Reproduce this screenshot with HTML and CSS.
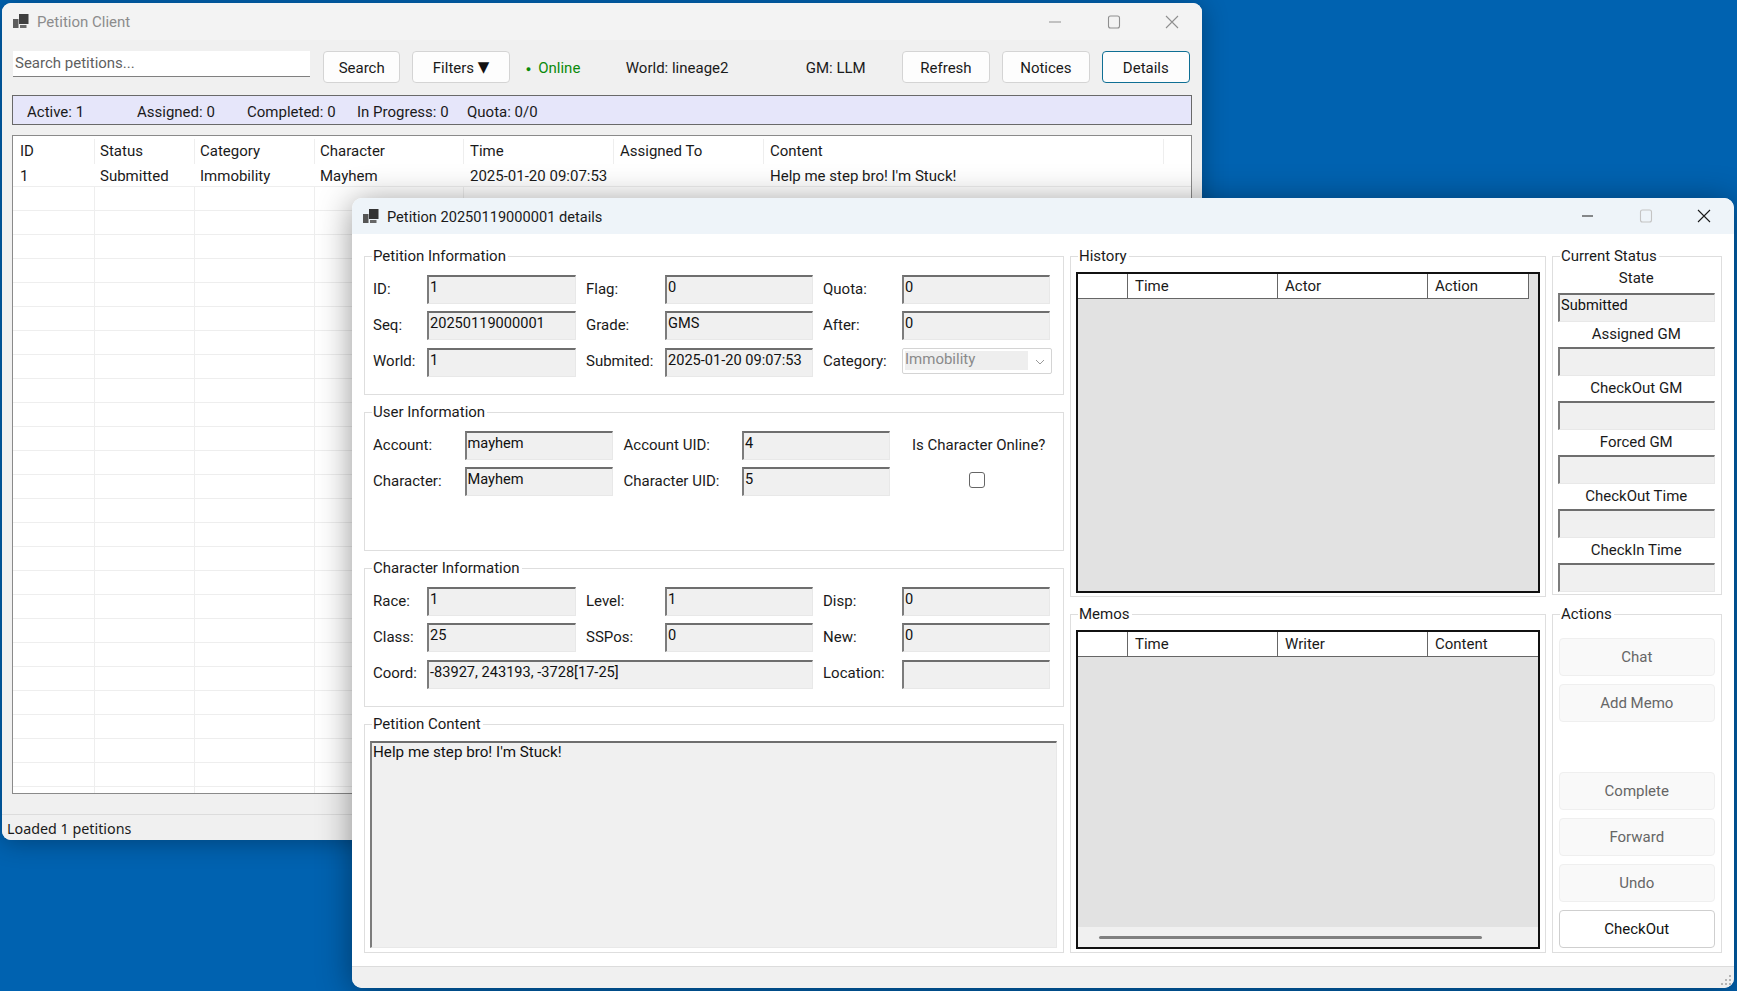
FILE: index.html
```html
<!DOCTYPE html>
<html lang="en">
<head>
<meta charset="utf-8">
<title>Petition Client</title>
<link rel="stylesheet" href="styles.css">
</head>
<body>
<div class="desktop">

  <section class="window main-window">
    <header class="titlebar main-titlebar">
      <svg class="app-icon" viewBox="0 0 16 15"><rect x="0" y="5" width="5.5" height="9" fill="#5c5c5c"/><rect x="6" y="0" width="9.5" height="10" fill="#3f3f3f"/><rect x="7" y="11" width="6.5" height="3" fill="#6a6a6a"/></svg>
      <span class="title-text">Petition Client</span>
      <div class="win-controls inactive">
        <svg viewBox="0 0 14 14"><path d="M1 7h12"/></svg>
        <svg viewBox="0 0 14 14"><rect x="1.5" y="1" width="11" height="12" rx="2"/></svg>
        <svg viewBox="0 0 14 14"><path d="M1 1l12 12M13 1L1 13"/></svg>
      </div>
    </header>

    <div class="toolbar">
      <div class="search">Search petitions...</div>
      <button class="btn btn-search">Search</button>
      <button class="btn btn-filters">Filters <span class="caret">▼</span></button>
      <span class="tb-online"><span class="dot">●</span>Online</span>
      <span class="tb-world">World: lineage2</span>
      <span class="tb-gm">GM: LLM</span>
      <button class="btn btn-action">Refresh</button>
      <button class="btn btn-action">Notices</button>
      <button class="btn btn-action btn-default">Details</button>
    </div>

    <div class="stats">
      <span>Active: 1</span>
      <span>Assigned: 0</span>
      <span>Completed: 0</span>
      <span>In Progress: 0</span>
      <span>Quota: 0/0</span>
    </div>

    <div class="list">
      <div class="list-head">
        <span class="c-id">ID</span>
        <span class="c-status">Status</span>
        <span class="c-cat">Category</span>
        <span class="c-char">Character</span>
        <span class="c-time">Time</span>
        <span class="c-assn">Assigned To</span>
        <span class="c-content">Content</span>
      </div>
      <div class="list-row">
        <span class="c-id">1</span>
        <span class="c-status">Submitted</span>
        <span class="c-cat">Immobility</span>
        <span class="c-char">Mayhem</span>
        <span class="c-time">2025-01-20 09:07:53</span>
        <span class="c-assn"></span>
        <span class="c-content">Help me step bro! I'm Stuck!</span>
      </div>
      <div class="list-empty"></div>
    </div>

    <footer class="main-status">Loaded 1 petitions</footer>
  </section>

  <section class="window details-window">
    <header class="titlebar details-titlebar">
      <svg class="app-icon" viewBox="0 0 16 15"><rect x="0" y="5" width="5.5" height="9" fill="#555"/><rect x="6" y="0" width="9.5" height="10" fill="#333"/><rect x="7" y="11" width="6.5" height="3" fill="#666"/></svg>
      <span class="title-text">Petition 20250119000001 details</span>
      <div class="win-controls">
        <svg viewBox="0 0 14 14"><path d="M2 7h11"/></svg>
        <svg class="off" viewBox="0 0 14 14"><rect x="1.5" y="1" width="11" height="12" rx="2"/></svg>
        <svg viewBox="0 0 14 14"><path d="M1 1l12 12M13 1L1 13"/></svg>
      </div>
    </header>

    <div class="details-body">
      <div class="col-left">
        <div class="group group-std">
          <span class="legend">Petition Information</span>
          <div class="form form-three">
            <span>ID:</span><div class="field">1</div>
            <span>Flag:</span><div class="field">0</div>
            <span>Quota:</span><div class="field">0</div>
            <span>Seq:</span><div class="field">20250119000001</div>
            <span>Grade:</span><div class="field">GMS</div>
            <span>After:</span><div class="field">0</div>
            <span>World:</span><div class="field">1</div>
            <span>Submited:</span><div class="field">2025-01-20 09:07:53</div>
            <span>Category:</span>
            <div class="combo"><span class="combo-value">Immobility</span>
              <svg class="chevron" viewBox="0 0 10 6"><path d="M1 1l4 4 4-4"/></svg>
            </div>
          </div>
        </div>

        <div class="group group-std">
          <span class="legend">User Information</span>
          <div class="form form-user">
            <span>Account:</span><div class="field">mayhem</div>
            <span>Account UID:</span><div class="field">4</div>
            <span class="online-label">Is Character Online?</span>
            <span>Character:</span><div class="field">Mayhem</div>
            <span>Character UID:</span><div class="field">5</div>
            <span class="online-check"><span class="checkbox"></span></span>
          </div>
        </div>

        <div class="group group-std">
          <span class="legend">Character Information</span>
          <div class="form form-three">
            <span>Race:</span><div class="field">1</div>
            <span>Level:</span><div class="field">1</div>
            <span>Disp:</span><div class="field">0</div>
            <span>Class:</span><div class="field">25</div>
            <span>SSPos:</span><div class="field">0</div>
            <span>New:</span><div class="field">0</div>
            <span>Coord:</span><div class="field span-three">-83927, 243193, -3728[17-25]</div>
            <span>Location:</span><div class="field"></div>
          </div>
        </div>

        <div class="group group-content">
          <span class="legend">Petition Content</span>
          <div class="field content-area">Help me step bro! I'm Stuck!</div>
        </div>
      </div>

      <div class="col-mid">
        <div class="group group-history">
          <span class="legend">History</span>
          <div class="grid-view">
            <div class="grid-head history-head">
              <span class="gh-blank"></span><span>Time</span><span>Actor</span><span class="gh-last">Action</span>
            </div>
          </div>
        </div>
        <div class="group group-memos">
          <span class="legend">Memos</span>
          <div class="grid-view">
            <div class="grid-head memo-head">
              <span class="gh-blank"></span><span>Time</span><span>Writer</span><span class="gh-last">Content</span>
            </div>
            <div class="grid-fill"></div>
            <div class="hscroll"><span class="hthumb"></span></div>
          </div>
        </div>
      </div>

      <div class="col-right">
        <div class="group group-status">
          <span class="legend">Current Status</span>
          <div class="status-list">
            <span class="status-label status-first">State</span><div class="field">Submitted</div>
            <span class="status-label">Assigned GM</span><div class="field"></div>
            <span class="status-label">CheckOut GM</span><div class="field"></div>
            <span class="status-label">Forced GM</span><div class="field"></div>
            <span class="status-label">CheckOut Time</span><div class="field"></div>
            <span class="status-label">CheckIn Time</span><div class="field"></div>
          </div>
        </div>
        <div class="group group-actions">
          <span class="legend">Actions</span>
          <div class="action-list">
            <button class="action" disabled>Chat</button>
            <button class="action" disabled>Add Memo</button>
            <span class="action-gap"></span>
            <button class="action" disabled>Complete</button>
            <button class="action" disabled>Forward</button>
            <button class="action" disabled>Undo</button>
            <button class="action action-on">CheckOut</button>
          </div>
        </div>
      </div>
    </div>

    <footer class="details-status">
      <svg class="grip" viewBox="0 0 12 12"><g fill="#b5b5b5"><rect x="9" y="1" width="2" height="2"/><rect x="5" y="5" width="2" height="2"/><rect x="9" y="5" width="2" height="2"/><rect x="1" y="9" width="2" height="2"/><rect x="5" y="9" width="2" height="2"/><rect x="9" y="9" width="2" height="2"/></g></svg>
    </footer>
  </section>
</div>
</body>
</html>
```
FILE: styles.css
```css
* { box-sizing: border-box; }
html, body { margin: 0; padding: 0; }
body {
  width: 1737px;
  height: 991px;
  overflow: hidden;
  font-family: Roboto, "Liberation Sans", sans-serif;
  font-size: 15px;
  color: #1a1a1a;
}
.desktop {
  position: relative;
  width: 1737px;
  height: 991px;
  background: #0062b0;
  overflow: hidden;
}
.window {
  position: absolute;
  display: flex;
  flex-direction: column;
  overflow: hidden;
}
.main-window {
  left: 2px;
  top: 3px;
  width: 1200px;
  height: 837px;
  background: #f0f0f0;
  border-radius: 9px;
  box-shadow: 0 2px 26px rgba(0, 0, 0, .32);
}
.details-window {
  left: 352px;
  top: 198px;
  width: 1382px;
  height: 790px;
  background: #fff;
  border-radius: 10px;
  box-shadow: 0 4px 34px rgba(0, 0, 0, .42);
}

/* title bars */
.titlebar {
  display: flex;
  align-items: center;
  flex: none;
}
.main-titlebar { height: 37px; background: #f3f3f3; padding-left: 11px; }
.details-titlebar { height: 36px; background: #eef4f9; padding-left: 11px; }
.app-icon { width: 16px; height: 15px; flex: none; }
.title-text { margin-left: 8px; }
.main-titlebar .title-text { color: #8c8c8c; }
.details-titlebar .title-text { font-size: 14.6px; padding-top: 2px; }
.win-controls {
  margin-left: auto;
  display: flex;
  align-items: center;
}
.win-controls svg {
  width: 14px;
  height: 14px;
  fill: none;
  stroke: #1a1a1a;
  stroke-width: 1.1;
}
.win-controls svg + svg { margin-left: 44.5px; }
.win-controls .off { stroke: #c4c4c4; }
.win-controls.inactive svg { stroke: #8f8f8f; }
.main-titlebar .win-controls { padding-right: 23px; }
.details-titlebar .win-controls { padding-right: 23px; }

/* toolbar */
.toolbar {
  display: flex;
  align-items: flex-start;
  padding: 11px 0 0 11px;
  height: 43px;
  flex: none;
}
.search {
  width: 299px;
  height: 26px;
  background: #fff;
  border-bottom: 1px solid #808080;
  padding: 2px 2px 0;
  color: #5f5f5f;
  line-height: 21px;
  margin-right: 13px;
}
.btn {
  height: 32px;
  padding: 2px 0 0;
  border: 1px solid #d4d4d4;
  border-radius: 4px;
  background: #fdfdfd;
  font: inherit;
  color: #1a1a1a;
}
.btn-search { width: 78px; margin-right: 12px; }
.btn-filters { width: 98px; }
.caret { font-family: "DejaVu Sans", sans-serif; font-size: 15px; line-height: 14px; color: #111; position: relative; top: -1px; }
.btn-action { width: 88px; margin-right: 12.5px; }
.btn-default { border-color: #0f6f94; }
.tb-online, .tb-world, .tb-gm { line-height: 34px; flex: none; }
.tb-online { width: 100px; margin-left: 16px; color: #0a8a0a; }
.dot { font-size: 9px; margin-right: 7px; vertical-align: 1px; }
.tb-world { width: 180px; }
.tb-gm { width: 96.5px; }

/* stats bar */
.stats {
  display: flex;
  flex: none;
  height: 30px;
  margin: 12px 10px 0;
  padding: 4px 0 0 14px;
  align-items: center;
  background: #e6e6fa;
  border: 1px solid #696969;
}
.stats span { width: 110px; flex: none; }

/* petition list */
.list {
  display: flex;
  flex-direction: column;
  flex: none;
  height: 659px;
  margin: 10px 10px 0;
  background: #fff;
  border: 1px solid #8a8a8a;
}
.list-head, .list-row { display: flex; flex: none; }
.list-head { height: 28px; padding-top: 3px; }
.list-row { height: 23px; border-bottom: 1px solid #eeeeee; }
.list-head span, .list-row span {
  display: block;
  flex: none;
  padding-left: 5px;
  line-height: 24px;
}
.list-row span { line-height: 24px; }
.list-head span { border-right: 1px solid #eeeeee; }
.list-head .c-id, .list-row .c-id { padding-left: 7px; }
.list-head .c-time, .list-row .c-time,
.list-head .c-assn, .list-row .c-assn,
.list-head .c-content, .list-row .c-content { padding-left: 6px; }
.c-id { width: 82px; }
.c-status { width: 100px; }
.c-cat { width: 120px; }
.c-char { width: 149px; }
.c-time { width: 150px; }
.c-assn { width: 150px; }
.c-content { width: 400px; }
.list-empty {
  flex: 1;
  background-color: #fff;
  background-image:
    repeating-linear-gradient(to bottom, transparent 0 23px, #eeeeee 23px 24px),
    linear-gradient(#eeeeee, #eeeeee),
    linear-gradient(#eeeeee, #eeeeee),
    linear-gradient(#eeeeee, #eeeeee),
    linear-gradient(#eeeeee, #eeeeee);
  background-repeat: repeat, no-repeat, no-repeat, no-repeat, no-repeat;
  background-size: auto, 1px 100%, 1px 100%, 1px 100%, 1px 100%;
  background-position: 0 0, 81px 0, 181px 0, 301px 0, 450px 0;
}
.main-status {
  flex: none;
  margin-top: 20px;
  height: 26px;
  border-top: 1px solid #dcdcdc;
  padding-left: 5px;
  line-height: 28px;
  background: #f0f0f0;
  font-family: "Noto Sans", Roboto, sans-serif;
  font-size: 14.3px;
}

/* details body */
.details-body {
  display: grid;
  grid-template-columns: 699.5px 475.5px 169.5px;
  column-gap: 6.5px;
  padding: 22px 0 0 12px;
  flex: none;
  height: 732px;
}
.col-left, .col-mid, .col-right {
  display: flex;
  flex-direction: column;
}
.group {
  position: relative;
  flex: none;
  border: 1px solid #dedede;
}
.legend {
  position: absolute;
  top: -10px;
  left: 7px;
  padding: 0 2px 0 1px;
  background: #fff;
  line-height: 18px;
}
.group-std { height: 139px; margin-bottom: 17px; }
.group-content { height: 229px; padding: 16px 6px 5px 5px; }
.group-history { height: 341px; margin-bottom: 17px; padding: 15px 5px 3.5px 5px; }
.group-memos { height: 339px; padding: 15px 5px 3.5px 5px; }
.group-status { height: 339px; margin-bottom: 19px; }
.group-actions { height: 339px; }

/* forms */
.form {
  display: grid;
  align-items: center;
  row-gap: 7.25px;
  grid-auto-rows: 29px;
  padding: 18px 0 0 8px;
}
.form > span { padding-bottom: 2px; }
.form-three { grid-template-columns: 54px 149px 89px 148px 89px 148px; }
.form-three > .field + span { padding-left: 10px; }
.form-three > .field:nth-child(6n) + span { padding-left: 0; }
.form-three > .span-three { grid-column: span 3; }
.form-three > .span-three + span { padding-left: 10px; }
.form-user { grid-template-columns: 91.5px 148px 129.5px 148px 1fr; }
.form-user > .field + span { padding-left: 11px; }
.form-user > .online-label { padding: 0 6px 2px 0; }
.form-user > .online-check { padding: 0 10px 4px 0; }
.online-label, .online-check { display: flex; justify-content: center; white-space: nowrap; }
.checkbox {
  width: 16px;
  height: 16px;
  background: #fff;
  border: 1px solid #666;
  border-radius: 3px;
}
.field {
  height: 29px;
  background: #f0f0f0;
  border-top: 2px solid #6e6e6e;
  border-left: 2px solid #7c7c7c;
  border-right: 1px solid #e8e8e8;
  border-bottom: 1px solid #e8e8e8;
  padding: 0 0 0 1px;
  font-size: 14.6px;
  line-height: 20px;
  color: #111;
  overflow: hidden;
  white-space: nowrap;
}
.combo {
  position: relative;
  display: flex;
  align-items: center;
  width: 150px;
  height: 26px;
  background: #fff;
  border: 1px solid #d4d4d4;
  border-radius: 2px;
  padding: 0 23px 0 2px;
  align-self: start;
}
.combo-value {
  display: block;
  flex: 1;
  height: 19px;
  line-height: 16px;
  background: #eeeeee;
  color: #8a8a8a;
}
.chevron {
  position: absolute;
  right: 6px;
  top: 10px;
  width: 10px;
  height: 6px;
  fill: none;
  stroke: #9a9a9a;
  stroke-width: 1;
}
.content-area { height: 207px; padding-left: 1px; font-size: 15.2px; line-height: 19px; }

/* grid views */
.grid-view {
  display: flex;
  flex-direction: column;
  height: 100%;
  background: #e2e2e2;
  border: 2px solid #111;
}
.grid-head {
  display: flex;
  flex: none;
  height: 25px;
  background: #fff;
  border-bottom: 1px solid #666;
  line-height: 24px;
}
.grid-head span {
  flex: none;
  width: 150px;
  padding-left: 7px;
  border-right: 1px solid #666;
}
.grid-head .gh-blank { width: 50px; padding: 0; }
.history-head { width: 451px; border-right: 1px solid #666; }
.grid-head .gh-last { width: 100px; border-right: 0; }
.memo-head .gh-last { flex: 1; }
.grid-fill { flex: 1; }
.hscroll {
  flex: none;
  height: 20px;
  background: #f0f0f0;
  padding: 9px 0 0 21px;
}
.hthumb {
  display: block;
  width: 383px;
  height: 3px;
  background: #808080;
  border-radius: 2px;
}

/* status */
.status-list {
  display: flex;
  flex-direction: column;
  padding: 11px 6px 0 5px;
}
.status-list .field { flex: none; height: 29px; width: 157px; }
.status-label {
  display: block;
  flex: none;
  height: 25px;
  line-height: 24px;
  text-align: center;
}
.status-first { line-height: 20px; }

/* actions */
.action-list {
  display: flex;
  flex-direction: column;
  gap: 8px;
  padding: 23px 6px 0 6px;
}
.action {
  flex: none;
  height: 38px;
  padding: 0;
  font: inherit;
  color: #666;
  background: #f9f9f9;
  border: 1px solid #efefef;
  border-radius: 4px;
}
.action-gap { flex: none; height: 34px; }
.action-on { color: #111; background: #fff; border-color: #cfcfcf; }

/* details status */
.details-status {
  position: relative;
  flex: 1;
  background: #f0f0f0;
  border-top: 1px solid #dcdcdc;
}
.grip {
  position: absolute;
  right: 2px;
  bottom: 2px;
  width: 12px;
  height: 12px;
}
```
